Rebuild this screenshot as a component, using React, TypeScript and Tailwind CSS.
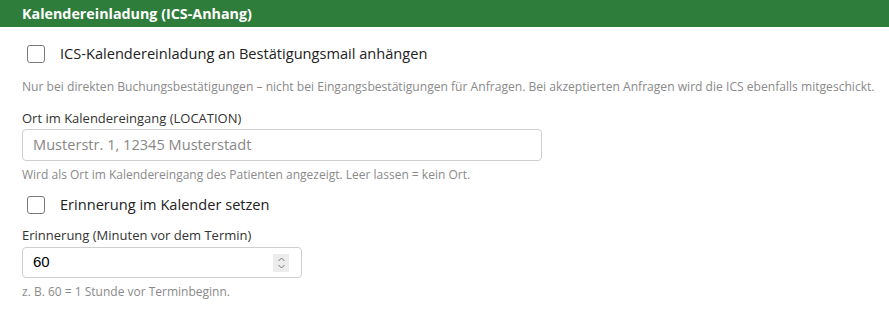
import React from "react";

const font = { fontFamily: '"Open Sans", "Noto Sans", sans-serif' };

function Check({ label }: { label: string }) {
  return (
    <label className="flex items-center h-[26px]">
      <span className="ml-[5px] w-[18px] h-[18px] rounded-[3px] border border-[#7a7a7a] bg-white" />
      <span className="ml-[15px] text-[14.6px] text-[#222]">{label}</span>
    </label>
  );
}

function Help({ children, size }: { children: React.ReactNode; size: string }) {
  return (
    <p className={`${size} text-[#8a8a8a] leading-[16px] whitespace-nowrap`}>{children}</p>
  );
}

export default function App() {
  return (
    <div className="w-[889px] h-[319px] bg-white overflow-hidden" style={font}>
      <div className="h-[27px] bg-[#2e7d3a] px-[22px] flex items-center">
        <h2 className="text-[14.3px] font-bold text-white">Kalendereinladung (ICS-Anhang)</h2>
      </div>
      <div className="px-[22px]">
        <div className="mt-[14px]">
          <Check label="ICS-Kalendereinladung an Bestätigungsmail anhängen" />
        </div>
        <div className="mt-[12px]">
          <Help size="text-[12.1px]">
            Nur bei direkten Buchungsbestätigungen – nicht bei Eingangsbestätigungen für Anfragen. Bei akzeptierten Anfragen wird die ICS ebenfalls mitgeschickt.
          </Help>
        </div>
        <div className="mt-[14px] text-[13px] text-[#333] leading-[18px]">Ort im Kalendereingang (LOCATION)</div>
        <div className="mt-[2px] w-[520px] h-[32px] rounded-[4px] border border-[#cfcfcf] flex items-center px-[10px]">
          <span className="text-[14.6px] text-[#888]">Musterstr. 1, 12345 Musterstadt</span>
        </div>
        <div className="mt-[6px]">
          <Help size="text-[12px]">Wird als Ort im Kalendereingang des Patienten angezeigt. Leer lassen = kein Ort.</Help>
        </div>
        <div className="mt-[9px]">
          <Check label="Erinnerung im Kalender setzen" />
        </div>
        <div className="mt-[8px] text-[13px] text-[#333] leading-[18px]">Erinnerung (Minuten vor dem Termin)</div>
        <div className="mt-[3px] w-[280px] h-[31px] rounded-[4px] border border-[#cfcfcf] flex items-center pl-[10px] pr-[12px]">
          <span className="flex-1 text-[15px] text-black" style={{ fontFamily: '"Liberation Sans", Arial, sans-serif' }}>60</span>
          <span className="w-[16px] h-[18px] bg-[#ececec] flex flex-col items-center justify-center">
            <svg width="9" height="14" viewBox="0 0 9 14" fill="none" stroke="#777" strokeWidth="1">
              <path d="M1.5 5 L4.5 2 L7.5 5" />
              <path d="M1.5 9 L4.5 12 L7.5 9" />
            </svg>
          </span>
        </div>
        <div className="mt-[6px]">
          <Help size="text-[12px]">z. B. 60 = 1 Stunde vor Terminbeginn.</Help>
        </div>
      </div>
    </div>
  );
}
